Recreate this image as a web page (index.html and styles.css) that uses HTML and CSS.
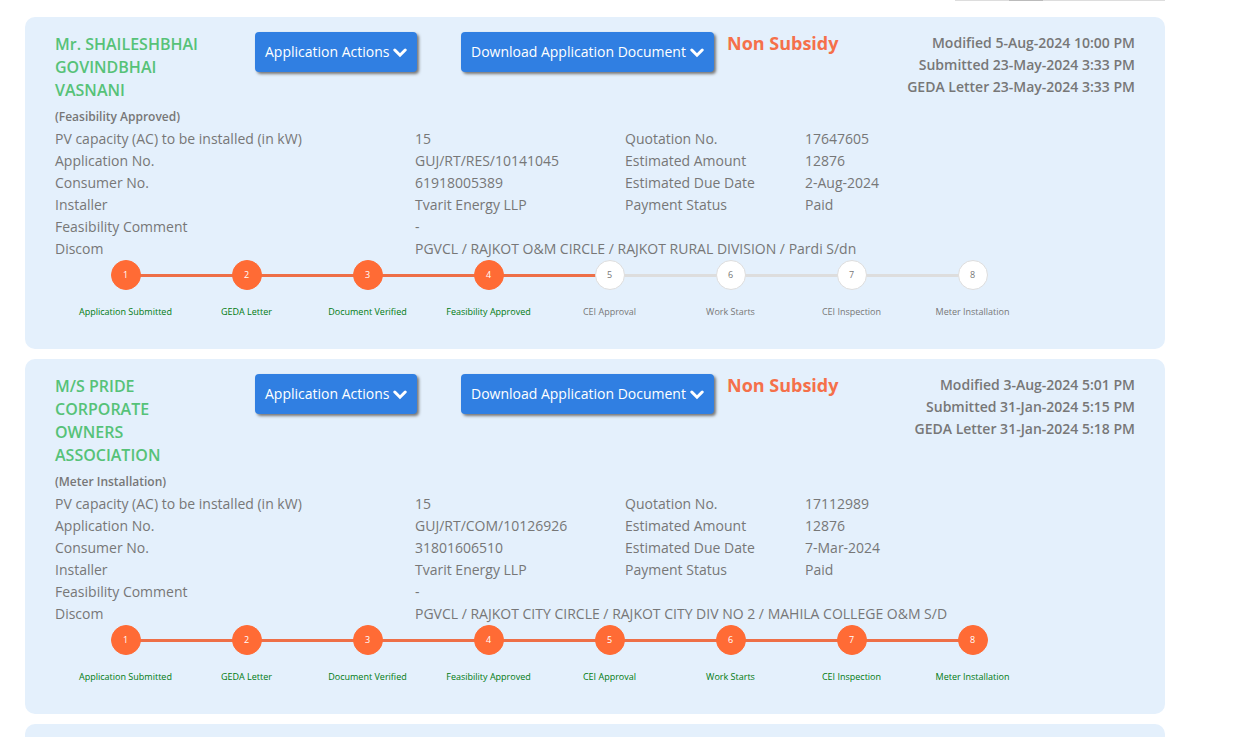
FILE: index.html
```html
<!DOCTYPE html>
<html lang="en">
<head>
<meta charset="utf-8">
<title>Applications</title>
<link rel="stylesheet" href="styles.css">
</head>
<body>
<main class="applications">
  <div class="pager-edge"><span class="pager-current"></span></div>

  <article class="card">
    <header class="card-head">
      <div>
        <h2 class="applicant">Mr. SHAILESHBHAI GOVINDBHAI VASNANI</h2>
        <p class="status">(Feasibility Approved)</p>
      </div>
      <div><button type="button" class="action">Application Actions <svg class="chevron" viewBox="0 0 14 14" aria-hidden="true"><path d="M1.800 5L7 10.200L12.200 5"/></svg></button></div>
      <div><button type="button" class="action">Download Application Document <svg class="chevron" viewBox="0 0 14 14" aria-hidden="true"><path d="M1.800 5L7 10.200L12.200 5"/></svg></button></div>
      <p class="subsidy">Non Subsidy</p>
      <div class="dates">
        <p>Modified 5-Aug-2024 10:00 PM</p>
        <p>Submitted 23-May-2024 3:33 PM</p>
        <p>GEDA Letter 23-May-2024 3:33 PM</p>
      </div>
    </header>
    <table class="details">
      <colgroup><col class="col-label"><col class="col-value"><col class="col-label2"><col></colgroup>
      <tr><th scope="row">PV capacity (AC) to be installed (in kW)</th><td>15</td><th scope="row">Quotation No.</th><td>17647605</td></tr>
      <tr><th scope="row">Application No.</th><td>GUJ/RT/RES/10141045</td><th scope="row">Estimated Amount</th><td>12876</td></tr>
      <tr><th scope="row">Consumer No.</th><td>61918005389</td><th scope="row">Estimated Due Date</th><td>2-Aug-2024</td></tr>
      <tr><th scope="row">Installer</th><td>Tvarit Energy LLP</td><th scope="row">Payment Status</th><td>Paid</td></tr>
      <tr><th scope="row">Feasibility Comment</th><td colspan="3">-</td></tr>
      <tr><th scope="row">Discom</th><td colspan="3">PGVCL / RAJKOT O&amp;M CIRCLE / RAJKOT RURAL DIVISION / Pardi S/dn</td></tr>
    </table>
    <ol class="steps">
      <li class="step done"><span class="dot">1</span><span class="step-name">Application Submitted</span></li>
      <li class="step done"><span class="dot">2</span><span class="step-name">GEDA Letter</span></li>
      <li class="step done"><span class="dot">3</span><span class="step-name">Document Verified</span></li>
      <li class="step done"><span class="dot">4</span><span class="step-name">Feasibility Approved</span></li>
      <li class="step"><span class="dot">5</span><span class="step-name">CEI Approval</span></li>
      <li class="step"><span class="dot">6</span><span class="step-name">Work Starts</span></li>
      <li class="step"><span class="dot">7</span><span class="step-name">CEI Inspection</span></li>
      <li class="step"><span class="dot">8</span><span class="step-name">Meter Installation</span></li>
    </ol>
  </article>

  <article class="card">
    <header class="card-head">
      <div>
        <h2 class="applicant">M/S PRIDE CORPORATE OWNERS ASSOCIATION</h2>
        <p class="status">(Meter Installation)</p>
      </div>
      <div><button type="button" class="action">Application Actions <svg class="chevron" viewBox="0 0 14 14" aria-hidden="true"><path d="M1.800 5L7 10.200L12.200 5"/></svg></button></div>
      <div><button type="button" class="action">Download Application Document <svg class="chevron" viewBox="0 0 14 14" aria-hidden="true"><path d="M1.800 5L7 10.200L12.200 5"/></svg></button></div>
      <p class="subsidy">Non Subsidy</p>
      <div class="dates">
        <p>Modified 3-Aug-2024 5:01 PM</p>
        <p>Submitted 31-Jan-2024 5:15 PM</p>
        <p>GEDA Letter 31-Jan-2024 5:18 PM</p>
      </div>
    </header>
    <table class="details">
      <colgroup><col class="col-label"><col class="col-value"><col class="col-label2"><col></colgroup>
      <tr><th scope="row">PV capacity (AC) to be installed (in kW)</th><td>15</td><th scope="row">Quotation No.</th><td>17112989</td></tr>
      <tr><th scope="row">Application No.</th><td>GUJ/RT/COM/10126926</td><th scope="row">Estimated Amount</th><td>12876</td></tr>
      <tr><th scope="row">Consumer No.</th><td>31801606510</td><th scope="row">Estimated Due Date</th><td>7-Mar-2024</td></tr>
      <tr><th scope="row">Installer</th><td>Tvarit Energy LLP</td><th scope="row">Payment Status</th><td>Paid</td></tr>
      <tr><th scope="row">Feasibility Comment</th><td colspan="3">-</td></tr>
      <tr><th scope="row">Discom</th><td colspan="3">PGVCL / RAJKOT CITY CIRCLE / RAJKOT CITY DIV NO 2 / MAHILA COLLEGE O&amp;M S/D</td></tr>
    </table>
    <ol class="steps">
      <li class="step done"><span class="dot">1</span><span class="step-name">Application Submitted</span></li>
      <li class="step done"><span class="dot">2</span><span class="step-name">GEDA Letter</span></li>
      <li class="step done"><span class="dot">3</span><span class="step-name">Document Verified</span></li>
      <li class="step done"><span class="dot">4</span><span class="step-name">Feasibility Approved</span></li>
      <li class="step done"><span class="dot">5</span><span class="step-name">CEI Approval</span></li>
      <li class="step done"><span class="dot">6</span><span class="step-name">Work Starts</span></li>
      <li class="step done"><span class="dot">7</span><span class="step-name">CEI Inspection</span></li>
      <li class="step done"><span class="dot">8</span><span class="step-name">Meter Installation</span></li>
    </ol>
  </article>

  <article class="card card-next"></article>
</main>
</body>
</html>
```

FILE: styles.css
```css
* {
  box-sizing: border-box;
}

body {
  margin: 0;
  background: #fff;
  color: #777;
  font: 14px/22px "Open Sans", "Noto Sans", sans-serif;
}

p,
h2,
ol {
  margin: 0;
  padding: 0;
}

.applications {
  display: flex;
  flex-direction: column;
  gap: 10px;
  max-width: 1140px;
  margin: 0 78px 0 25px;
}

.pager-edge {
  align-self: flex-end;
  width: 210px;
  height: 1px;
  margin-bottom: 6px;
  padding-left: 54px;
  background: #ddd;
}

.pager-current {
  display: block;
  width: 34px;
  height: 1px;
  background: #bbb;
}

.card {
  padding: 15px 30px 31px;
  border-radius: 10px;
  background: #e4f0fc;
}

.card-next {
  padding: 13px 0 0;
  border-radius: 10px 10px 0 0;
}

.card-head {
  display: grid;
  grid-template-columns: 200px 206px 266px 1fr auto;
  align-items: start;
}

.applicant {
  width: 160px;
  margin: 1px 0 4px;
  color: #56c278;
  font-size: 16px;
  font-weight: 600;
  line-height: 23px;
}

.status {
  font-size: 12px;
  font-weight: 600;
}

.action {
  display: inline-flex;
  align-items: center;
  gap: 4px;
  height: 40px;
  padding: 0 10px;
  border: 0;
  border-radius: 4px;
  background: #307fe2;
  box-shadow: 2px 2px 3px #777;
  color: #fff;
  font: inherit;
  white-space: nowrap;
  cursor: pointer;
}

.chevron {
  width: 14px;
  height: 14px;
  fill: none;
  stroke: #fff;
  stroke-width: 3;
  stroke-linecap: round;
}

.subsidy {
  color: #f5704a;
  font-size: 18px;
  font-weight: 700;
}

.dates {
  font-weight: 600;
  text-align: right;
}

.details {
  width: 100%;
  border-collapse: collapse;
  table-layout: fixed;
}

.details th,
.details td {
  padding: 0;
  font-weight: 400;
  text-align: left;
}

.col-label {
  width: 360px;
}

.col-value {
  width: 210px;
}

.col-label2 {
  width: 180px;
}

.steps {
  display: grid;
  grid-template-columns: repeat(8, 1fr);
  margin: 0 102px 0 10px;
  list-style: none;
  font-size: 9px;
  line-height: 12px;
}

.step {
  position: relative;
  display: flex;
  flex-direction: column;
  align-items: center;
  gap: 16px;
}

.step + .step::before {
  content: "";
  position: absolute;
  top: 14px;
  left: -50%;
  width: 100%;
  height: 3px;
  background: #ddd;
}

.step.done::before,
.step.done + .step::before {
  background: #ee6f47;
}

.dot {
  z-index: 1;
  display: flex;
  align-items: center;
  justify-content: center;
  width: 30px;
  height: 30px;
  border: 1px solid #ddd;
  border-radius: 50%;
  background: #fff;
}

.done .dot {
  border-color: #ff6b35;
  background: #ff6b35;
  color: #fff;
}

.done .step-name {
  color: #007a10;
}
```
